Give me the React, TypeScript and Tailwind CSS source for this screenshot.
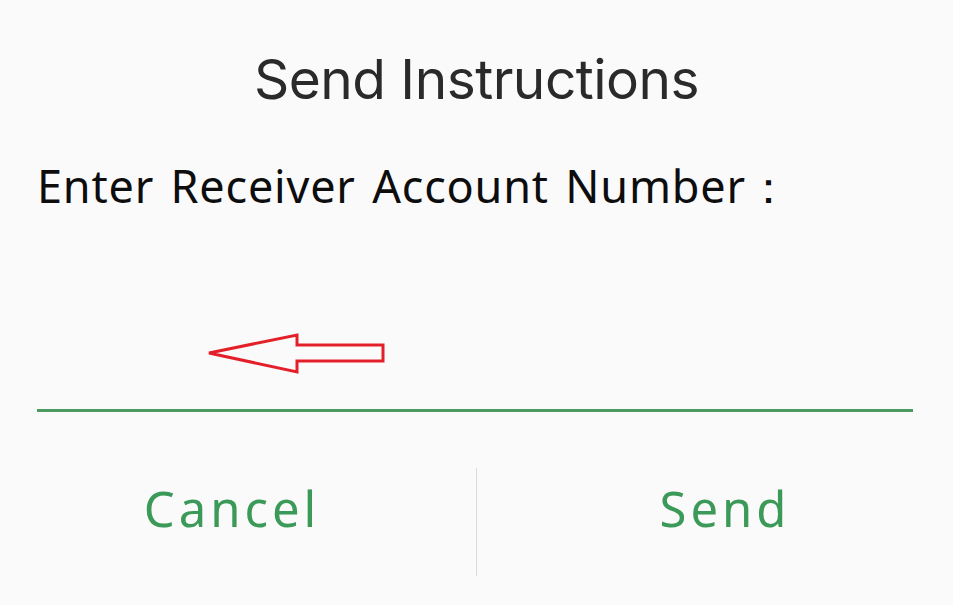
import React from "react";

export default function App() {
  return (
    <div className="w-[953px] h-[605px] bg-[#fbfafb] flex flex-col overflow-hidden font-['Inter',sans-serif]">
      <h1 className="pt-[47px] text-center text-[55px] leading-[64px] text-[#2b2a2b] font-normal tracking-[-0.5px]">
        Send Instructions
      </h1>

      <p className="mt-[47px] pl-[37px] text-[45px] leading-[56px] text-[#0d0d0d] font-['Noto_Sans',sans-serif] tracking-[0.8px] [word-spacing:4px]">
        Enter Receiver Account Number：
      </p>

      {/* input area, the red arrow is an annotation */}
      <div className="relative ml-[37px] mr-[40px] h-[198px] border-b-[3px] border-[#4c9a5f]">
        <svg
          className="absolute left-[168px] top-[116px]"
          width="185"
          height="46"
          viewBox="0 0 185 46"
          fill="none"
        >
          <polygon
            points="4,23 92,5 92,15 178,15 178,31 92,31 92,42"
            stroke="#e3202a"
            strokeWidth="3"
            strokeLinejoin="miter"
          />
        </svg>
      </div>

      <div className="flex flex-1 items-center pb-[28px] pt-[54px]">
        <button className="flex-1 basis-0 h-[108px] pb-[26px] text-[49px] tracking-[4px] text-[#3c9a59] font-['Noto_Sans',sans-serif] text-center">
          <span className="inline-block -translate-x-[6px]">Cancel</span>
        </button>
        <div className="w-px h-[108px] bg-[#dadada]" />
        <button className="flex-1 basis-0 h-[108px] pb-[26px] text-[49px] tracking-[4px] text-[#3c9a59] font-['Noto_Sans',sans-serif] text-center">
          <span className="inline-block translate-x-[10px]">Send</span>
        </button>
      </div>
    </div>
  );
}
